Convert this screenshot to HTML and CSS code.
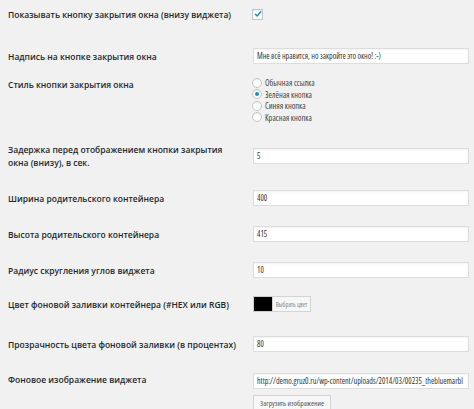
FILE: index.html
```html
<!DOCTYPE html>
<html lang="ru">
<head>
<meta charset="utf-8">
<title>Настройки виджета</title>
<link rel="stylesheet" href="styles.css">
</head>
<body>
<div class="form">
  <div class="row r1">
    <div class="label">Показывать кнопку закрытия окна (внизу виджета)</div>
    <div class="field">
      <span class="checkbox"><svg viewBox="0 0 10 10" width="10" height="10"><path d="M2.4 5.3 L4.2 7.0 L7.7 2.8" fill="none" stroke="#1e8cbe" stroke-width="1.5" stroke-linecap="round" stroke-linejoin="round"/></svg></span>
    </div>
  </div>
  <div class="row r2">
    <div class="label">Надпись на кнопке закрытия окна</div>
    <div class="field"><div class="input">Мне всё нравится, но закройте это окно! :-)</div></div>
  </div>
  <div class="row r3">
    <div class="label">Стиль кнопки закрытия окна</div>
    <div class="field radios">
      <div class="radio-row"><span class="radio"></span><span class="radio-text">Обычная ссылка</span></div>
      <div class="radio-row"><span class="radio checked"></span><span class="radio-text">Зелёная кнопка</span></div>
      <div class="radio-row"><span class="radio"></span><span class="radio-text">Синяя кнопка</span></div>
      <div class="radio-row"><span class="radio"></span><span class="radio-text">Красная кнопка</span></div>
    </div>
  </div>
  <div class="row r4">
    <div class="label">Задержка перед отображением кнопки закрытия окна (внизу), в сек.</div>
    <div class="field"><div class="input">5</div></div>
  </div>
  <div class="row">
    <div class="label">Ширина родительского контейнера</div>
    <div class="field"><div class="input">400</div></div>
  </div>
  <div class="row">
    <div class="label">Высота родительского контейнера</div>
    <div class="field"><div class="input">415</div></div>
  </div>
  <div class="row">
    <div class="label">Радиус скругления углов виджета</div>
    <div class="field"><div class="input">10</div></div>
  </div>
  <div class="row r8">
    <div class="label">Цвет фоновой заливки контейнера (#HEX или RGB)</div>
    <div class="field color">
      <span class="swatch"></span><span class="color-btn">Выбрать цвет</span>
    </div>
  </div>
  <div class="row r9">
    <div class="label">Прозрачность цвета фоновой заливки (в процентах)</div>
    <div class="field"><div class="input">80</div></div>
  </div>
  <div class="row r10">
    <div class="label">Фоновое изображение виджета</div>
    <div class="field">
      <div class="input url">http://demo.gruz0.ru/wp-content/uploads/2014/03/00235_thebluemarbl</div>
      <span class="upload-btn">Загрузить изображение</span>
    </div>
  </div>
</div>
</body>
</html>
```

FILE: styles.css
```css
html, body {
  margin: 0;
  padding: 0;
}
body {
  background: #f1f1f1;
  font-family: "Open Sans", "Noto Sans", sans-serif;
  color: #222;
  width: 474px;
  height: 409px;
  overflow: hidden;
}
.form {
  padding: 0 5px 0 8px;
}
.row {
  display: grid;
  grid-template-columns: 245px 1fr;
  align-items: center;
  padding: 10px 0;
}
.label {
  font-size: 8.5px;
  line-height: 13px;
  font-weight: 600;
  width: 236px;
  color: #23282d;
}
.field {
  min-width: 0;
}
.r1 { padding: 8px 0 7px; }
.r2 { padding: 20px 0 13px; }
.r3 { padding: 0 0 9px; align-items: start; }
.r3 .label { margin-top: 1px; }
.r4 { padding: 11px 0; }
.r8 { padding: 8px 0 12px; }
.r9 { padding: 12px 0 8px; }
.r10 { padding: 13px 0 0; align-items: start; }

.checkbox {
  display: block;
  width: 9px;
  height: 9px;
  margin-left: -1px;
  border: 1px solid #c3c6c9;
  background: #fff;
  box-shadow: inset 0 1px 2px rgba(0,0,0,0.07);
  position: relative;
}
.checkbox svg {
  position: absolute;
  left: 0;
  top: -1px;
}
.input {
  box-sizing: border-box;
  height: 16px;
  border: 1px solid #dddddd;
  background: #fff;
  box-shadow: inset 0 1px 2px rgba(0,0,0,0.05);
  padding: 0 3px;
  font-size: 8px;
  line-height: 14px;
  font-stretch: 75%;
  color: #333;
  white-space: nowrap;
  overflow: hidden;
}
.radios {
  font-size: 8.3px;
  font-stretch: 75%;
  color: #444;
}
.radio-row {
  display: flex;
  align-items: center;
  height: 11.5px;
}
.radio {
  box-sizing: border-box;
  width: 10px;
  height: 10px;
  margin-left: -1px;
  border: 1px solid #c3c6c9;
  border-radius: 50%;
  background: #fff;
  box-shadow: inset 0 1px 2px rgba(0,0,0,0.08);
  display: flex;
  align-items: center;
  justify-content: center;
}
.radio.checked::before {
  content: "";
  width: 4px;
  height: 4px;
  border-radius: 50%;
  background: #1e8cbe;
}
.radio-text {
  margin-left: 3px;
  line-height: 11px;
}
.color {
  display: flex;
  align-items: stretch;
  height: 16px;
}
.swatch {
  width: 19px;
  background: #000;
  border: 1px solid #ccc;
  border-right: none;
  box-sizing: border-box;
}
.color-btn {
  box-sizing: border-box;
  width: 39px;
  border: 1px solid #d4d4d4;
  background: #f7f7f7;
  font-size: 6.5px;
  font-stretch: 75%;
  color: #888;
  display: flex;
  align-items: center;
  justify-content: center;
}
.upload-btn {
  display: inline-block;
  box-sizing: border-box;
  height: 17px;
  padding: 0 6px;
  border: 1px solid #d2d2d2;
  background: #f7f7f7;
  font-size: 7.5px;
  line-height: 15px;
  font-stretch: 75%;
  color: #555;
  box-shadow: 0 1px 0 rgba(0,0,0,0.04);
}
```
